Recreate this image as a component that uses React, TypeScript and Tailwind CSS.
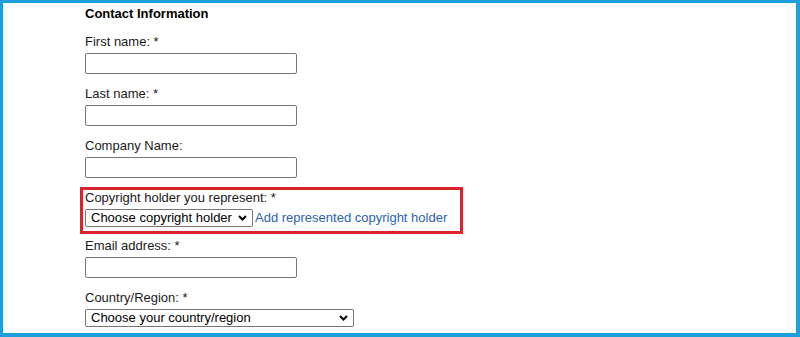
import React from "react";

function Chevron() {
  return (
    <svg width="9" height="6" viewBox="0 0 9 6" className="shrink-0">
      <path d="M1 1 L4.5 4.5 L8 1" fill="none" stroke="#000" strokeWidth="2" />
    </svg>
  );
}

function Select({ text, width }: { text: string; width: string }) {
  return (
    <div
      className={`flex h-[18px] items-center justify-between rounded-[2px] border border-[#767676] bg-white pl-[5px] pr-[5px] ${width}`}
    >
      <span className="leading-[16px] text-black">{text}</span>
      <Chevron />
    </div>
  );
}

function Field({ label, last }: { label: string; last?: boolean }) {
  return (
    <div className={last ? "" : "mb-[12px]"}>
      <div className="mb-[3px] leading-[16px]">{label}</div>
      <div className="h-[21px] w-[212px] rounded-[2px] border border-[#767676] bg-white" />
    </div>
  );
}

export default function App() {
  return (
    <div
      className="h-[337px] w-[800px] overflow-hidden border-t-[3px] border-l-[3px] border-r-[4px] border-b-[4px] border-[#1ba0db] bg-white text-[13px] text-[#1a1a1a]"
      style={{ fontFamily: '"Liberation Sans", Arial, sans-serif' }}
    >
      <div className="pl-[82px] pt-[3px]">
        <div className="mb-[12px] font-bold leading-[16px] text-black">Contact Information</div>
        <Field label="First name: *" />
        <Field label="Last name: *" />
        <Field label="Company Name:" last />
        <div className="-ml-[5px] mt-[9px] w-[383px] border-[3px] border-[#d9232e] pb-[4px] pl-[2px]">
          <div className="mb-[3px] leading-[16px]">Copyright holder you represent: *</div>
          <div className="flex items-center gap-[2px]">
            <Select text="Choose copyright holder" width="w-[168px]" />
            <a className="leading-[16px] text-[#2e62b0]" href="#">
              Add represented copyright holder
            </a>
          </div>
        </div>
        <div className="mt-[4px]">
          <Field label="Email address: *" />
        </div>
        <div>
          <div className="mb-[3px] leading-[16px]">Country/Region: *</div>
          <Select text="Choose your country/region" width="w-[269px]" />
        </div>
      </div>
    </div>
  );
}
